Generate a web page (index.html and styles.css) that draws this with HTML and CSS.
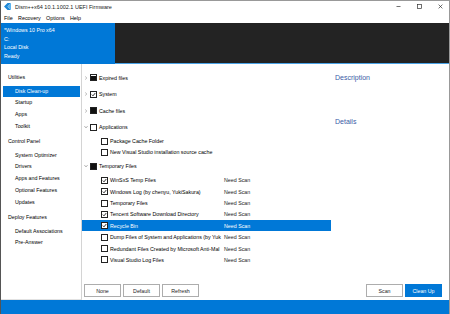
FILE: index.html
```html
<!DOCTYPE html>
<html lang="en">
<head>
    <meta charset="UTF-8">
    <title>Dism++x64 10.1.1002.1 UEFI Firmware</title>
    <link rel="stylesheet" href="styles.css">
</head>
<body>
<div class="window">

    <div class="titlebar">
        <svg class="app-icon" width="7" height="7" viewBox="0 0 7 7">
            <polygon points="0,3.5 3.5,0 7,0 3.5,3.5 7,7 3.5,7" fill="#1e88d8"/>
            <polygon points="3.5,3.5 7,0 7,7" fill="#5cb3ee"/>
        </svg>
        <span class="title">Dism++x64 10.1.1002.1 UEFI Firmware</span>
        <div class="controls">
            <svg width="5" height="5" viewBox="0 0 5 5"><line x1="0.5" y1="2.5" x2="4.5" y2="2.5" stroke="#333" stroke-width="0.7"/></svg>
            <svg width="5" height="5" viewBox="0 0 5 5"><rect x="0.6" y="0.6" width="3.8" height="3.8" fill="none" stroke="#333" stroke-width="0.7"/></svg>
            <svg width="5" height="5" viewBox="0 0 5 5"><path d="M0.6 0.6 L4.4 4.4 M4.4 0.6 L0.6 4.4" stroke="#333" stroke-width="0.7"/></svg>
        </div>
    </div>

    <div class="menubar">
        <span>File</span>
        <span>Recovery</span>
        <span>Options</span>
        <span>Help</span>
    </div>

    <div class="header">
        <div class="session">
            <p>*Windows 10 Pro x64</p>
            <p>C:</p>
            <p>Local Disk</p>
            <p>Ready</p>
        </div>
        <div class="session-list"></div>
    </div>

    <div class="main">
        <nav class="sidebar">
            <div class="group">Utilities</div>
            <div class="item active">Disk Clean-up</div>
            <div class="item">Startup</div>
            <div class="item">Apps</div>
            <div class="item">Toolkit</div>
            <div class="group">Control Panel</div>
            <div class="item">System Optimizer</div>
            <div class="item">Drivers</div>
            <div class="item">Apps and Features</div>
            <div class="item">Optional Features</div>
            <div class="item">Updates</div>
            <div class="group">Deploy Features</div>
            <div class="item">Default Associations</div>
            <div class="item">Pre-Answer</div>
        </nav>

        <div class="content">
            <div class="panes">
                <div class="tree">
                    <div class="node">
                        <svg class="arrow" width="4" height="4" viewBox="0 0 4 4"><path d="M1.2 0.5 L2.8 2 L1.2 3.5" fill="none" stroke="#888" stroke-width="0.6"/></svg>
                        <span class="cb mixed"></span>
                        <span class="name">Expired files</span>
                    </div>
                    <div class="node">
                        <svg class="arrow" width="4" height="4" viewBox="0 0 4 4"><path d="M1.2 0.5 L2.8 2 L1.2 3.5" fill="none" stroke="#888" stroke-width="0.6"/></svg>
                        <span class="cb"><svg width="5" height="5" viewBox="0 0 5 5"><path d="M0.8 2.6 L2 3.8 L4.3 1" fill="none" stroke="#000" stroke-width="0.8"/></svg></span>
                        <span class="name">System</span>
                    </div>
                    <div class="node">
                        <svg class="arrow" width="4" height="4" viewBox="0 0 4 4"><path d="M1.2 0.5 L2.8 2 L1.2 3.5" fill="none" stroke="#888" stroke-width="0.6"/></svg>
                        <span class="cb mixed"></span>
                        <span class="name">Cache files</span>
                    </div>
                    <div class="node">
                        <svg class="arrow" width="4" height="4" viewBox="0 0 4 4"><path d="M0.5 1.2 L2 2.8 L3.5 1.2" fill="none" stroke="#666" stroke-width="0.6"/></svg>
                        <span class="cb"></span>
                        <span class="name">Applications</span>
                    </div>
                    <div class="leaf">
                        <span class="cb"></span>
                        <span class="name">Package Cache Folder</span>
                        <span class="status"></span>
                    </div>
                    <div class="leaf">
                        <span class="cb"></span>
                        <span class="name wide">New Visual Studio installation source cache</span>
                    </div>
                    <div class="node">
                        <svg class="arrow" width="4" height="4" viewBox="0 0 4 4"><path d="M0.5 1.2 L2 2.8 L3.5 1.2" fill="none" stroke="#666" stroke-width="0.6"/></svg>
                        <span class="cb mixed"></span>
                        <span class="name">Temporary Files</span>
                    </div>
                    <div class="leaf">
                        <span class="cb"><svg width="5" height="5" viewBox="0 0 5 5"><path d="M0.8 2.6 L2 3.8 L4.3 1" fill="none" stroke="#000" stroke-width="0.8"/></svg></span>
                        <span class="name">WinSxS Temp Files</span>
                        <span class="status">Need Scan</span>
                    </div>
                    <div class="leaf">
                        <span class="cb"><svg width="5" height="5" viewBox="0 0 5 5"><path d="M0.8 2.6 L2 3.8 L4.3 1" fill="none" stroke="#000" stroke-width="0.8"/></svg></span>
                        <span class="name">Windows Log (by chenyu, YukiSakura)</span>
                        <span class="status">Need Scan</span>
                    </div>
                    <div class="leaf">
                        <span class="cb"></span>
                        <span class="name">Temporary Files</span>
                        <span class="status">Need Scan</span>
                    </div>
                    <div class="leaf">
                        <span class="cb"><svg width="5" height="5" viewBox="0 0 5 5"><path d="M0.8 2.6 L2 3.8 L4.3 1" fill="none" stroke="#000" stroke-width="0.8"/></svg></span>
                        <span class="name">Tencent Software Download Directory</span>
                        <span class="status">Need Scan</span>
                    </div>
                    <div class="leaf selected">
                        <span class="cb"><svg width="5" height="5" viewBox="0 0 5 5"><path d="M0.8 2.6 L2 3.8 L4.3 1" fill="none" stroke="#000" stroke-width="0.8"/></svg></span>
                        <span class="name">Recycle Bin</span>
                        <span class="status">Need Scan</span>
                    </div>
                    <div class="leaf">
                        <span class="cb"></span>
                        <span class="name">Dump Files of System and Applications (by Yuk</span>
                        <span class="status">Need Scan</span>
                    </div>
                    <div class="leaf">
                        <span class="cb"></span>
                        <span class="name">Redundant Files Created by Microsoft Anti-Mal</span>
                        <span class="status">Need Scan</span>
                    </div>
                    <div class="leaf">
                        <span class="cb"></span>
                        <span class="name">Visual Studio Log Files</span>
                        <span class="status">Need Scan</span>
                    </div>
                </div>

                <div class="info">
                    <h2>Description</h2>
                    <h2 class="details">Details</h2>
                </div>
            </div>

            <div class="actions">
                <button class="btn">None</button>
                <button class="btn">Default</button>
                <button class="btn">Refresh</button>
                <span class="spacer"></span>
                <button class="btn">Scan</button>
                <button class="btn primary">Clean Up</button>
            </div>
        </div>
    </div>

    <div class="statusbar"></div>
</div>
</body>
</html>
```

FILE: styles.css
```css
body {
    margin: 0;
    font-family: "Liberation Sans", Arial, sans-serif;
    font-size: 5.3px;
    color: #000;
    background-color: #fff;
}

.window {
    width: 450px;
    height: 314px;
    box-sizing: border-box;
    border-top: 1px solid #999;
    border-left: 1px solid #555;
    border-right: 1px solid #999;
    display: flex;
    flex-direction: column;
    overflow: hidden;
}

.titlebar {
    height: 11px;
    display: flex;
    align-items: center;
    padding-left: 3px;
    font-size: 5.5px;
    color: #222;
}

.app-icon {
    margin-right: 4px;
}

.controls {
    margin-left: auto;
    display: flex;
    gap: 16px;
    padding-right: 6px;
}

.menubar {
    height: 11px;
    display: flex;
    align-items: center;
    gap: 5.3px;
    padding-left: 3px;
    font-size: 5.4px;
}

.header {
    height: 41px;
    display: flex;
}

.session {
    width: 114px;
    background-color: #0078d7;
    color: #fff;
    padding: 3px 0 0 3px;
    box-sizing: border-box;
}

.session p {
    margin: 0;
    line-height: 8.7px;
}

.session-list {
    flex: 1;
    background-color: #232323;
    border-bottom: 1px solid #4aa3e6;
}

.main {
    flex: 1;
    display: flex;
    min-height: 0;
}

.sidebar {
    width: 81px;
    border-right: 1px solid #d4d4d4;
    border-bottom: 1px solid #e2e2e2;
    padding-top: 4.5px;
    box-sizing: border-box;
}

.group {
    height: 17px;
    line-height: 17px;
    padding-left: 7px;
}

.item {
    height: 11.8px;
    line-height: 11.8px;
    padding-left: 12px;
    margin: 0 1px 0 2px;
}

.item.active {
    background-color: #0078d7;
    color: #fff;
}

.content {
    flex: 1;
    display: flex;
    flex-direction: column;
}

.panes {
    flex: 1;
    display: flex;
}

.tree {
    width: 249px;
    padding-top: 5.8px;
}

.node {
    height: 16.4px;
    display: flex;
    align-items: center;
    padding-left: 2px;
}

.arrow {
    margin-right: 2px;
}

.leaf {
    height: 11.4px;
    display: flex;
    align-items: center;
    padding-left: 19px;
}

.leaf.selected {
    background-color: #0078d7;
    color: #fff;
}

.cb {
    width: 7px;
    height: 7px;
    box-sizing: border-box;
    border: 0.8px solid #222;
    background-color: #fff;
    display: flex;
    align-items: center;
    justify-content: center;
    margin-right: 2px;
    flex-shrink: 0;
}

.cb.mixed::after {
    content: "";
    width: 4.6px;
    height: 4.6px;
    background-color: #111;
}

.leaf .name {
    width: 114px;
    white-space: nowrap;
}

.leaf .name.wide {
    width: auto;
}

.status {
    color: #222;
}

.leaf.selected .status {
    color: #fff;
}

.info {
    flex: 1;
    padding: 8.5px 0 0 4px;
}

.info h2 {
    margin: 0;
    font-size: 7px;
    font-weight: normal;
    line-height: 9px;
    color: #3a5ca6;
}

.info .details {
    margin-top: 35.7px;
}

.actions {
    display: flex;
    gap: 2px;
    padding: 0 7px 3px 2px;
}

.spacer {
    flex: 1;
}

.btn {
    width: 37px;
    height: 13px;
    padding: 0;
    font-family: "Liberation Sans", Arial, sans-serif;
    font-size: 5.3px;
    color: #222;
    background-color: #fff;
    border: 1px solid #adadad;
}

.btn.primary {
    background-color: #0078d7;
    border-color: #0078d7;
    color: #fff;
}

.statusbar {
    height: 14px;
    background-color: #0078d7;
}
```
